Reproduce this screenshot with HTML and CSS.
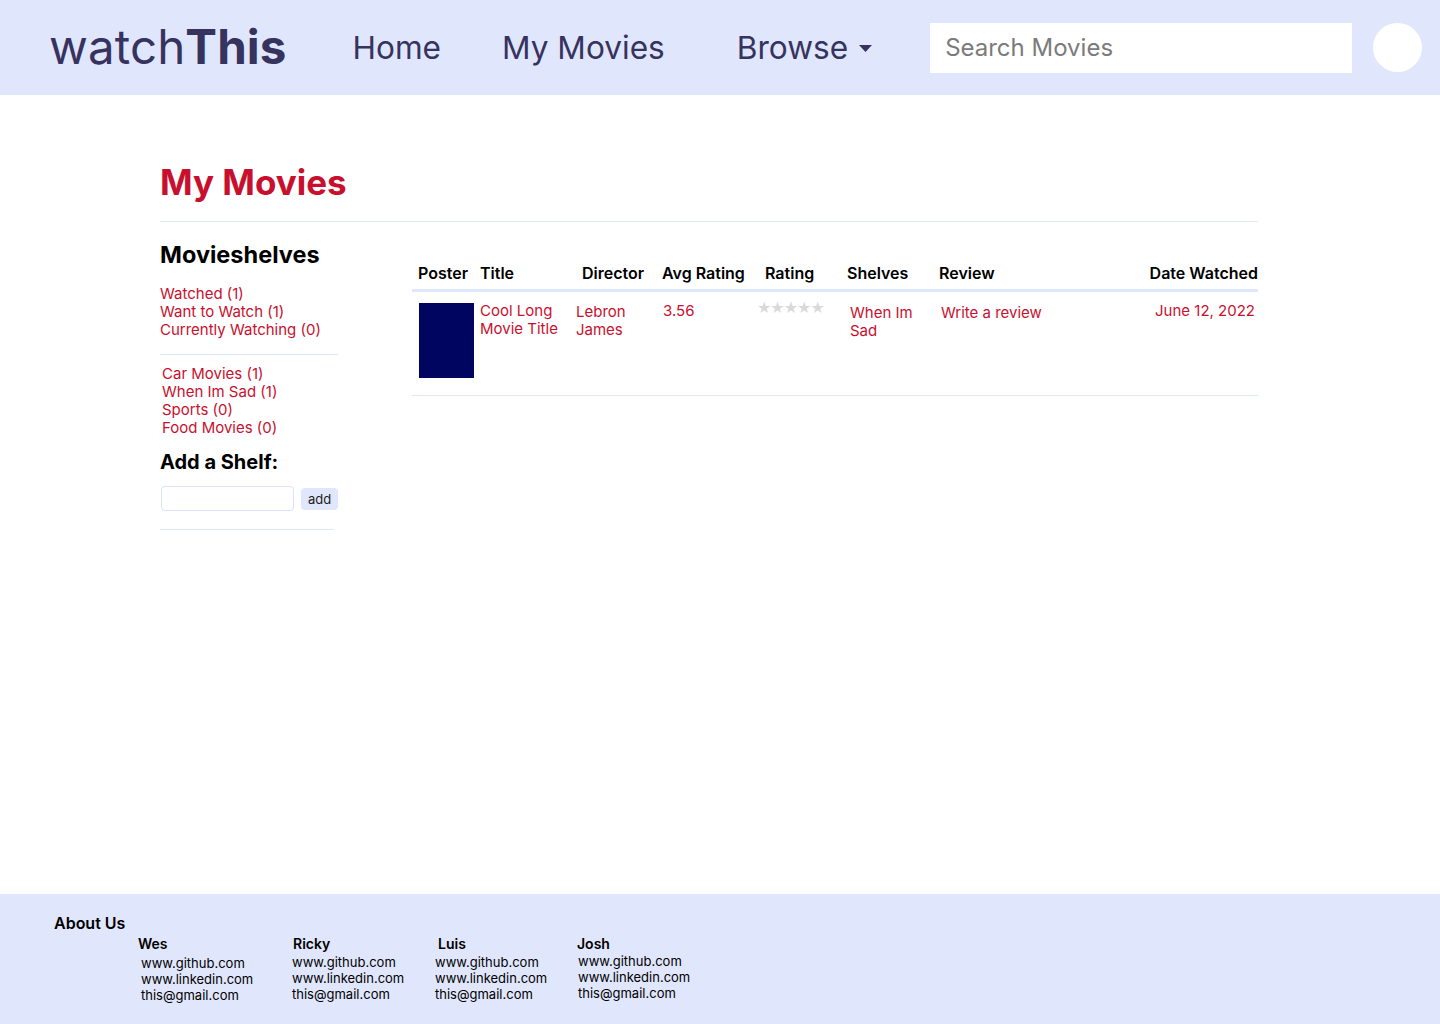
FILE: index.html
```html
<!DOCTYPE html>
<html>
<head>
<meta charset="utf-8">
<title>watchThis - My Movies</title>
<link rel="stylesheet" href="styles.css">
</head>
<body>
<header class="topbar">
  <div class="logo">watch<b>This</b></div>
  <nav class="nav">
    <a class="nav-home">Home</a>
    <a class="nav-mine">My Movies</a>
    <a class="nav-browse">Browse <svg class="caret" width="13" height="9" viewBox="0 0 13 9"><path d="M0 1h13L6.5 8z" fill="#37335f"/></svg></a>
  </nav>
  <div class="search">Search Movies</div>
  <div class="avatar"></div>
</header>

<main class="page">
  <h1 class="title">My Movies</h1>
  <hr class="rule">
  <div class="content">
    <aside class="side">
      <h2 class="side-head">Movieshelves</h2>
      <ul class="links">
        <li>Watched (1)</li>
        <li>Want to Watch (1)</li>
        <li>Currently Watching (0)</li>
      </ul>
      <hr class="side-rule">
      <ul class="links links-custom">
        <li>Car Movies (1)</li>
        <li>When Im Sad (1)</li>
        <li>Sports (0)</li>
        <li>Food Movies (0)</li>
      </ul>
      <h3 class="add-head">Add a Shelf:</h3>
      <div class="add-row">
        <div class="add-input"></div>
        <div class="add-btn">add</div>
      </div>
      <hr class="side-rule2">
    </aside>
    <table class="movies">
      <colgroup>
        <col class="w-poster"><col class="w-title"><col class="w-dir"><col class="w-avg"><col class="w-rating"><col class="w-shelves"><col class="w-review"><col class="w-date">
      </colgroup>
      <thead>
        <tr>
          <th>Poster</th>
          <th>Title</th>
          <th class="h-dir">Director</th>
          <th>Avg Rating</th>
          <th class="h-rating">Rating</th>
          <th>Shelves</th>
          <th>Review</th>
          <th class="c-date">Date Watched</th>
        </tr>
      </thead>
      <tbody>
        <tr>
          <td class="d-poster"><div class="poster"></div></td>
          <td class="red">Cool Long<br>Movie Title</td>
          <td class="red d2">Lebron<br>James</td>
          <td class="red d-avg">3.56</td>
          <td class="d-rating"><span class="stars">★★★★★</span></td>
          <td class="red d3 d-shelves">When Im<br>Sad</td>
          <td class="red d3 d-review">Write a review</td>
          <td class="c-date red">June 12, 2022</td>
        </tr>
      </tbody>
    </table>
  </div>
</main>

<footer class="foot">
  <div class="about">About Us</div>
  <div class="people">
    <div class="person p1"><div class="pname">Wes</div><div class="plinks">www.github.com<br>www.linkedin.com<br>this@gmail.com</div></div>
    <div class="person p2"><div class="pname">Ricky</div><div class="plinks">www.github.com<br>www.linkedin.com<br>this@gmail.com</div></div>
    <div class="person p3"><div class="pname">Luis</div><div class="plinks">www.github.com<br>www.linkedin.com<br>this@gmail.com</div></div>
    <div class="person p4"><div class="pname">Josh</div><div class="plinks">www.github.com<br>www.linkedin.com<br>this@gmail.com</div></div>
  </div>
</footer>
</body>
</html>
```
FILE: styles.css
```css
* { box-sizing: border-box; }
html, body { margin: 0; padding: 0; }
body {
  font-family: Inter, "Noto Sans", sans-serif;
  background: #fff;
  color: #000;
  width: 1440px;
  min-height: 1024px;
  display: flex;
  flex-direction: column;
}
.topbar {
  height: 95px;
  background: #e0e6fc;
  display: flex;
  align-items: center;
  padding-left: 49px;
  color: #37335f;
}
.logo {
  font-size: 47.5px;
  letter-spacing: 0.1px;
  font-weight: 400;
  line-height: 1;
  margin-top: -2px;
}
.logo b { font-weight: 700; }
.nav {
  display: flex;
  align-items: center;
  margin-left: 66px;
  font-size: 31.6px;
}
.nav a { display: flex; align-items: center; }
.nav-mine { margin-left: 61px; }
.nav-browse { margin-left: 72px; }
.caret { margin-left: 11px; margin-top: 2px; }
.search {
  margin-left: 58px;
  width: 422px;
  height: 50px;
  background: #fff;
  color: #7b7b7b;
  font-size: 24px;
  padding-left: 15px;
  display: flex;
  align-items: center;
}
.avatar {
  width: 49px;
  height: 49px;
  border-radius: 50%;
  background: #fff;
  margin-left: 21px;
}
.page {
  flex: 1;
  margin-left: 160px;
  width: 1098px;
  padding-top: 64px;
}
.title {
  margin: 0;
  color: #c8102e;
  font-size: 35px;
  font-weight: 700;
  line-height: 46px;
}
.rule {
  border: 0;
  border-top: 1px solid #e3e8f1;
  margin: 16px 0 0;
}
.content {
  display: flex;
  align-items: flex-start;
}
.side { width: 178px; padding-top: 19px; }
.side-head {
  margin: 0;
  font-size: 23.5px;
  font-weight: 700;
  line-height: 28px;
}
.links {
  list-style: none;
  margin: 16px 0 0;
  padding: 0;
  color: #c8102e;
  font-size: 15px;
  line-height: 18px;
}
.side-rule {
  border: 0;
  border-top: 1px solid #e0e6fc;
  margin: 15px 0 0;
}
.links-custom { margin-top: 10px; padding-left: 2px; }
.add-head {
  margin: 12px 0 0;
  font-size: 20px;
  font-weight: 700;
  line-height: 26px;
}
.add-row {
  display: flex;
  align-items: center;
  margin-top: 11px;
  padding-left: 1px;
}
.add-input {
  width: 133px;
  height: 25px;
  border: 1px solid #dbe3fb;
  border-radius: 4px;
  background: #fff;
}
.add-btn {
  margin-left: 7px;
  width: 37px;
  height: 22px;
  border-radius: 4px;
  background: #e0e6fc;
  font-size: 13px;
  color: #222;
  display: flex;
  align-items: center;
  justify-content: center;
}
.side-rule2 {
  border: 0;
  border-top: 1px solid #e0e6fc;
  margin: 18px 0 0;
  width: 174px;
}
.movies {
  margin-left: 74px;
  margin-top: 40px;
  width: 846px;
  border-collapse: collapse;
  table-layout: fixed;
}
.w-poster { width: 62px; }
.w-title { width: 96px; }
.w-dir { width: 86px; }
.w-avg { width: 95px; }
.w-rating { width: 90px; }
.w-shelves { width: 92px; }
.w-review { width: 200px; }
.w-date { width: 125px; }
.movies th {
  font-size: 16px;
  font-weight: 600;
  text-align: left;
  padding: 1px 0 5px 6px;
  line-height: 21px;
  border-bottom: 3px solid #e0e6fc;
  white-space: nowrap;
}
.movies th.h-dir { padding-left: 12px; }
.movies th.h-rating { padding-left: 14px; }
.movies td {
  vertical-align: top;
  padding: 10px 0 17px 6px;
  font-size: 15px;
  line-height: 18px;
  border-bottom: 1px solid #e0e6fc;
}
.movies td.d-poster { padding-left: 7px; }
.movies td.d-avg { padding-left: 7px; }
.movies td.d-shelves { padding-left: 9px; }
.movies td.d-review { padding-left: 8px; }
.red { color: #c8102e; }
.movies .c-date { text-align: right; padding-left: 0; }
.movies td.c-date { padding-right: 3px; }
.movies td.d2 { padding-top: 11px; }
.movies td.d3 { padding-top: 12px; }
.poster {
  width: 55px;
  height: 75px;
  background: #00055f;
  margin-top: 1px;
}
.stars {
  color: #d9d9d9;
  font-family: "DejaVu Sans", sans-serif;
  font-size: 16px;
  line-height: 16px;
  letter-spacing: -1px;
  display: block;
  margin-top: -2px;
}
.foot {
  height: 130px;
  background: #e0e6fc;
  padding: 19px 0 0 54px;
}
.about {
  font-size: 16px;
  font-weight: 600;
  line-height: 20px;
}
.people {
  display: flex;
  padding-left: 84px;
}
.person { font-size: 13px; line-height: 16px; }
.pname { font-size: 14px; font-weight: 600; line-height: 18px; margin-top: 2px; }
.plinks { margin-top: 1px; }
.p1 { width: 155px; }
.p1 .plinks { padding-left: 3px; margin-top: 2px; }
.p2 { width: 145px; }
.p2 .plinks { margin-left: -1px; }
.p3 { width: 139px; }
.p3 .plinks { margin-left: -3px; }
.p4 .plinks { padding-left: 1px; margin-top: 0; }
```
